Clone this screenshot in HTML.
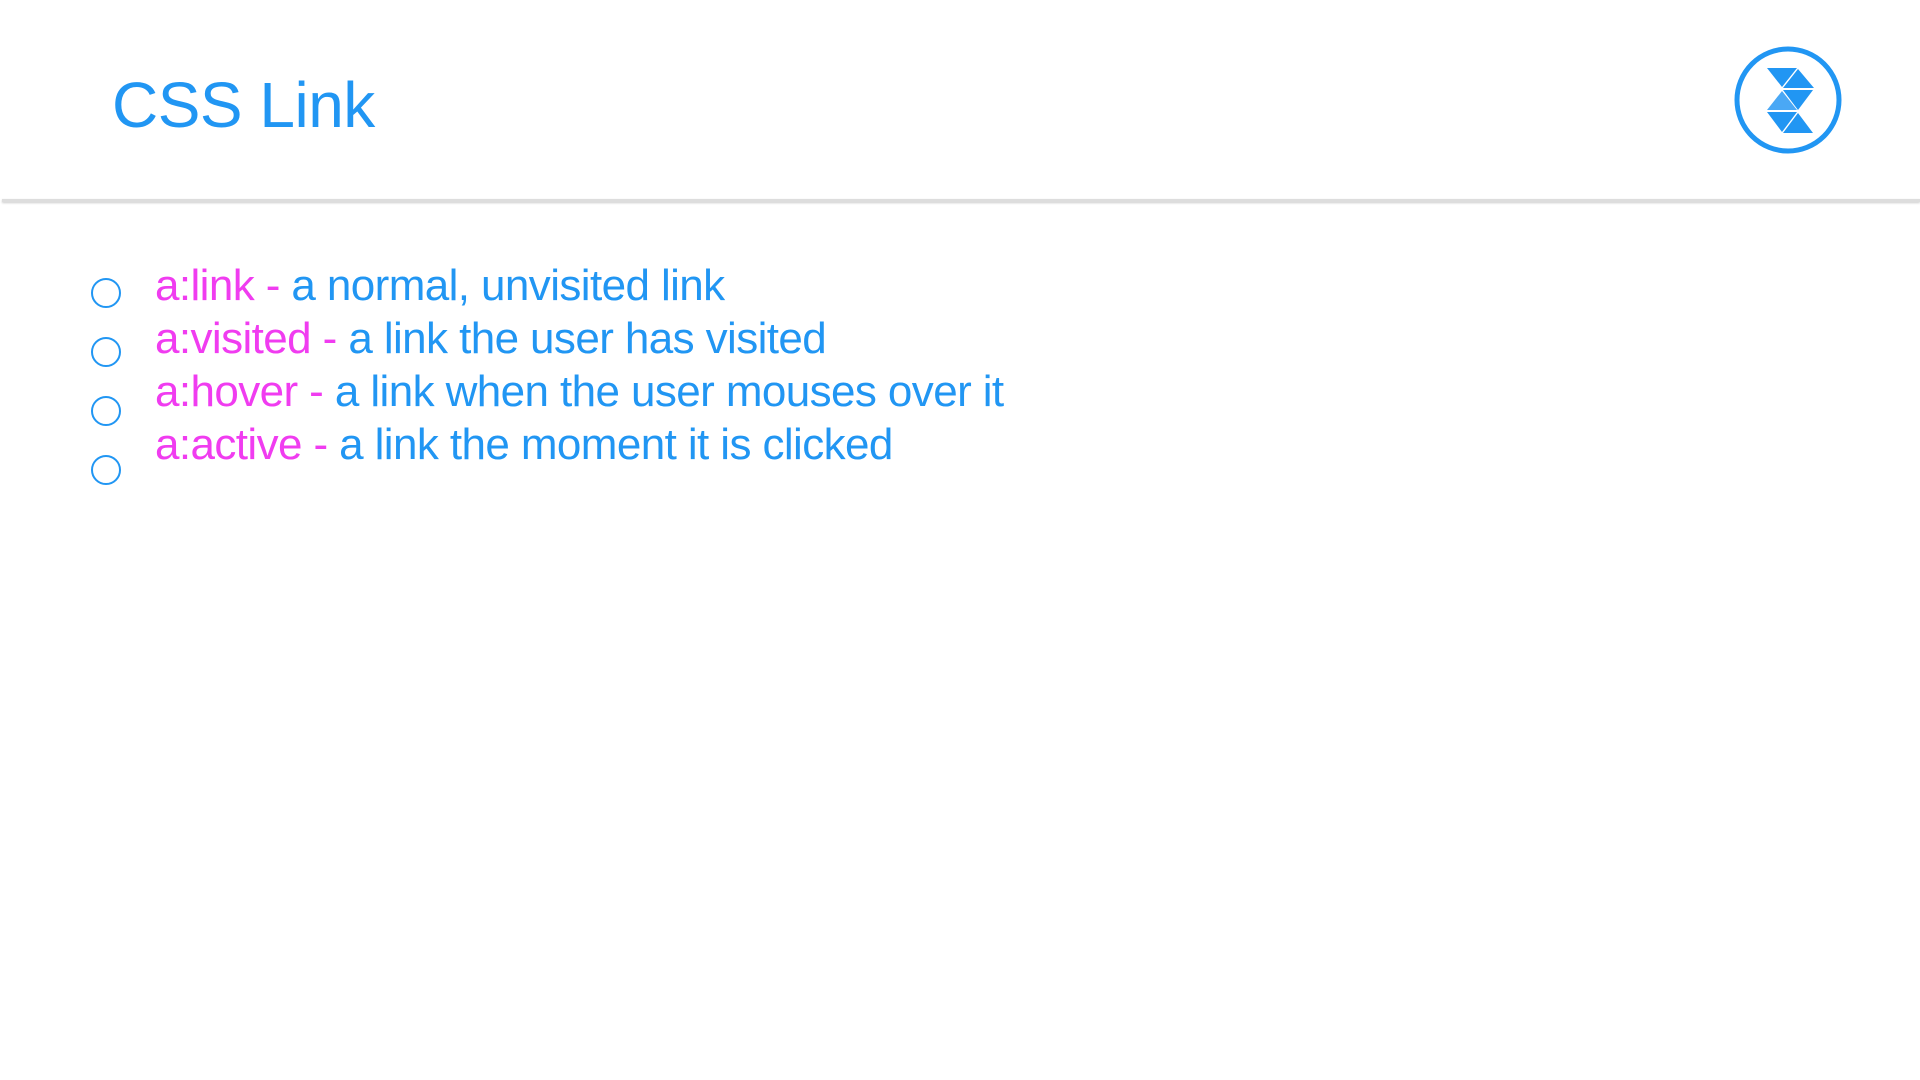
<!DOCTYPE html>
<html><head><meta charset="utf-8"><style>
body{margin:0;width:1920px;height:1080px;background:#fff;position:relative;overflow:hidden;font-family:"Liberation Sans",sans-serif;}
.t{position:absolute;left:112px;top:68px;font-size:64px;color:#2196f3;font-weight:300;white-space:nowrap;letter-spacing:-0.5px}
.hr{position:absolute;left:2px;right:0;top:199px;height:3px;background:#ddd;box-shadow:0 1px 2px #ccc}
.li{position:absolute;left:155px;font-size:44px;color:#2196f3;white-space:nowrap;letter-spacing:-0.6px}
.li b{font-weight:normal;color:#f03cf0}
.c{position:absolute;left:91px;width:30px;height:30px;border:2.5px solid #2196f3;border-radius:50%;box-sizing:border-box}
</style></head><body>
<div class="t">CSS Link</div>
<svg style="position:absolute;left:0;top:0" width="1920" height="200">
<circle cx="1788" cy="100" r="51" fill="none" stroke="#2196f3" stroke-width="5"/>
<g fill="#2196f3">
<polygon points="1767,68 1797,68 1782,87"/>
<polygon points="1798,69 1783,88 1814,88"/>
<polygon points="1783,90 1813,90 1798,110"/>
<polygon points="1782,91 1767,110 1797,110" fill="#4aa8f5"/>
<polygon points="1767,112 1797,112 1782,132"/>
<polygon points="1798,113 1783,133 1813,133"/>
</g></svg>
<div class="hr"></div>
<div class="c" style="top:278px"></div>
<div class="c" style="top:337px"></div>
<div class="c" style="top:396px"></div>
<div class="c" style="top:455px"></div>
<div class="li" style="top:261px"><b>a:link -</b> a normal, unvisited link</div>
<div class="li" style="top:314px"><b>a:visited -</b> a link the user has visited</div>
<div class="li" style="top:367px"><b>a:hover -</b> a link when the user mouses over it</div>
<div class="li" style="top:420px"><b>a:active -</b> a link the moment it is clicked</div>
</body></html>
